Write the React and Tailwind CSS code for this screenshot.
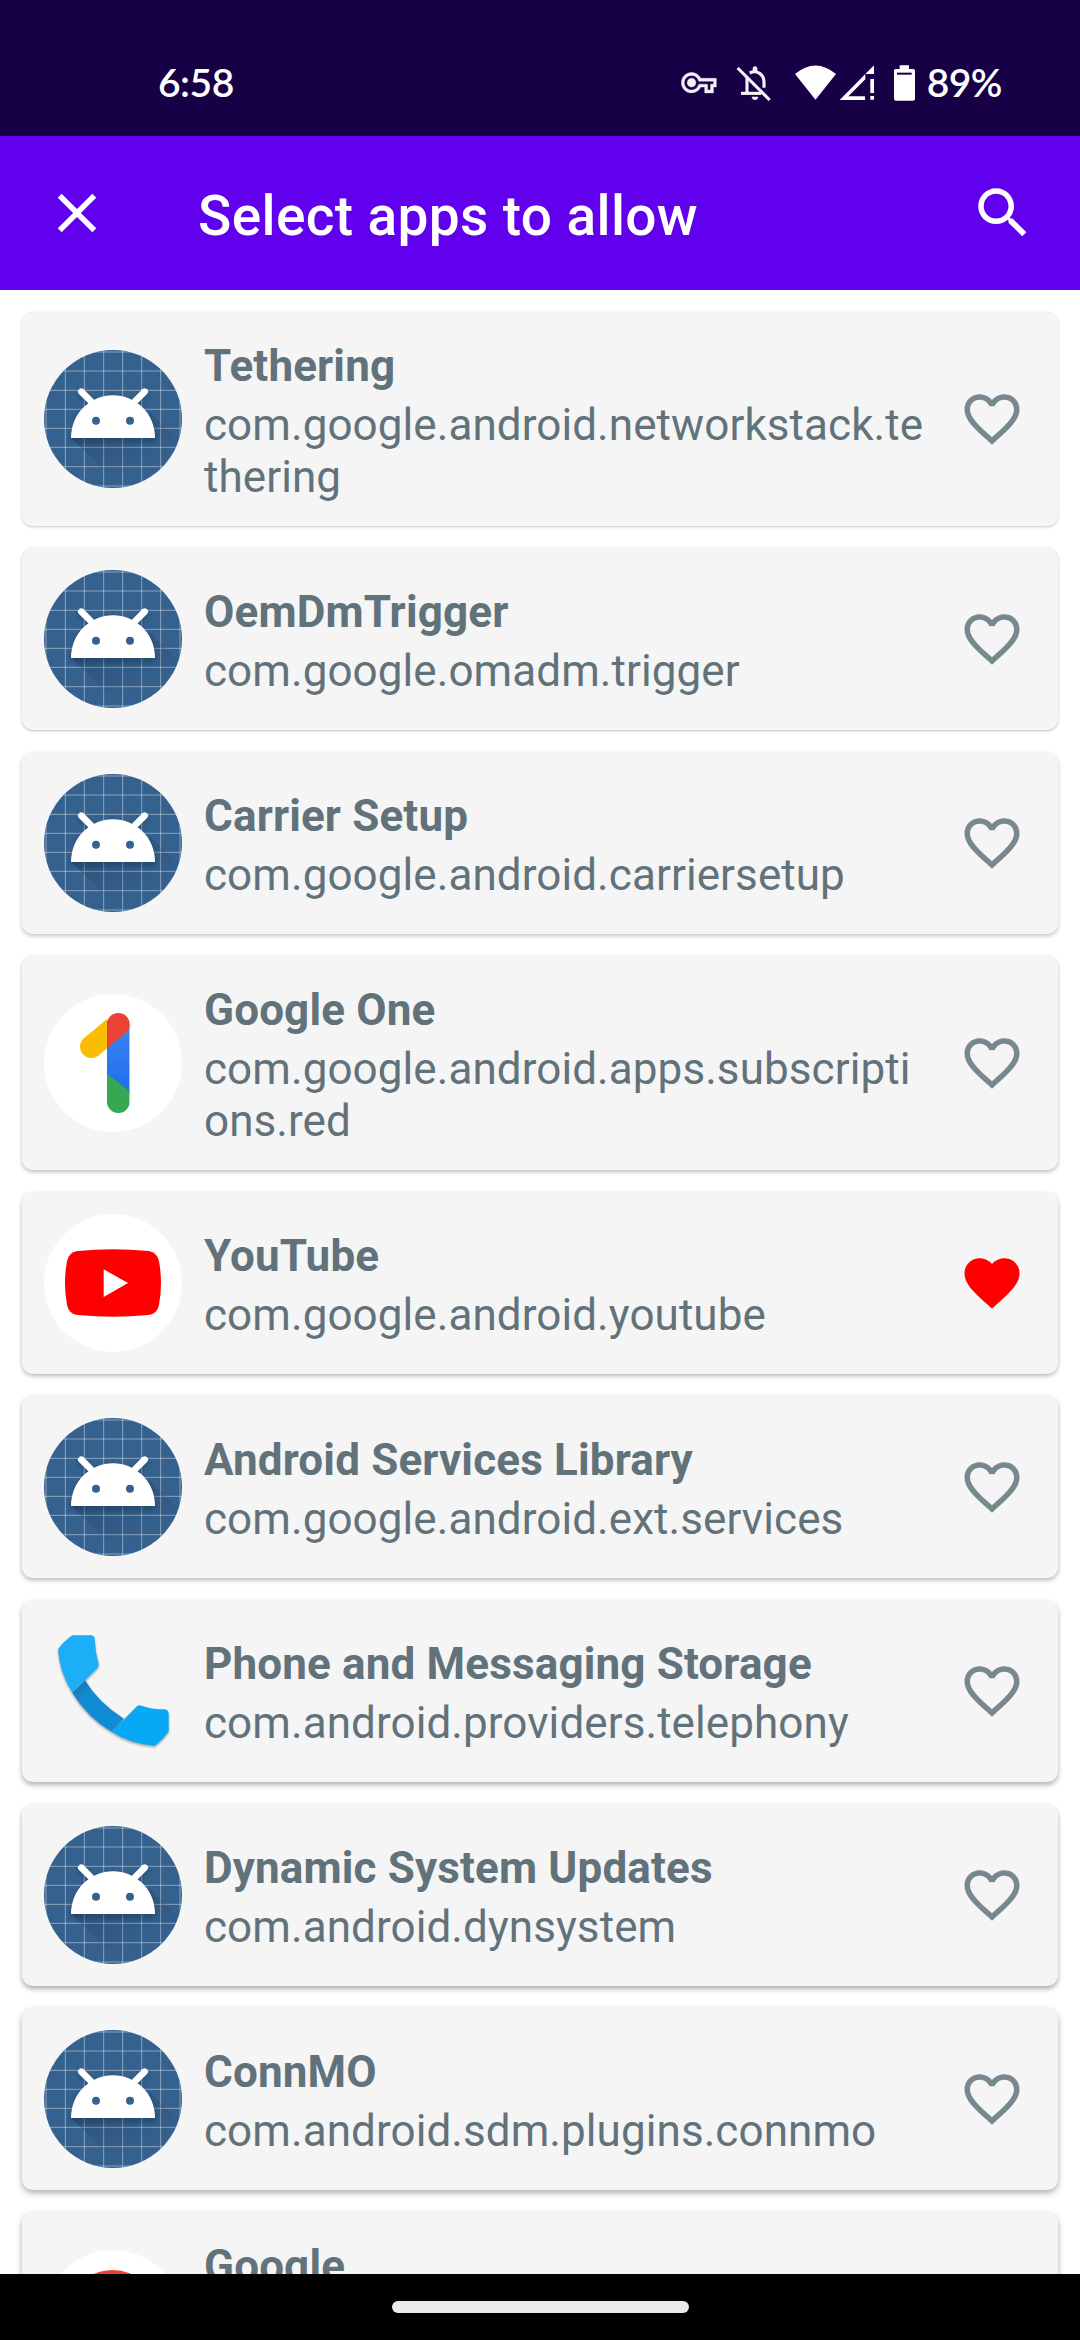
import React from "react";

const HEART_OUTLINE =
  "M16.5 3c-1.74 0-3.41.81-4.5 2.09C10.91 3.81 9.24 3 7.5 3 4.42 3 2 5.42 2 8.5c0 3.78 3.4 6.86 8.55 11.54L12 21.35l1.45-1.32C18.6 15.36 22 12.28 22 8.5 22 5.42 19.58 3 16.5 3zm-4.4 15.55l-.1.1-.1-.1C7.14 14.24 4 11.39 4 8.5 4 6.5 5.5 5 7.5 5c1.54 0 3.04.99 3.57 2.36h1.87C13.46 5.99 14.96 5 16.5 5c2 0 3.5 1.5 3.5 3.5 0 2.89-3.14 5.74-7.9 10.05z";
const HEART_FILLED =
  "M12 21.35l-1.45-1.32C5.4 15.36 2 12.28 2 8.5 2 5.42 4.42 3 7.5 3c1.74 0 3.41.81 4.5 2.09C13.09 3.81 14.76 3 16.5 3 19.58 3 22 5.42 22 8.5c0 3.78-3.4 6.86-8.55 11.54L12 21.35z";

const COLUMNS = [6, 64, 121, 179, 236, 293, 350, 408];
const ROWS = [6, 63, 121, 178, 235, 292, 350, 408];

function AndroidIcon({ id }) {
  return (
    <svg viewBox="0 0 414 414" className="size-[138px] shrink-0">
      <defs>
        <clipPath id={`${id}-clip`}>
          <circle cx="207" cy="207" r="207" />
        </clipPath>
        <linearGradient id={`${id}-shade`} gradientUnits="userSpaceOnUse" x1="160" y1="230" x2="235" y2="385">
          <stop offset="0" stopColor="#10243a" stopOpacity="0.24" />
          <stop offset="1" stopColor="#10243a" stopOpacity="0" />
        </linearGradient>
        <filter id={`${id}-blur`} x="-20%" y="-20%" width="140%" height="150%">
          <feGaussianBlur stdDeviation="8" />
        </filter>
      </defs>
      <g clipPath={`url(#${id}-clip)`}>
        <rect width="414" height="414" fill="#35618e" />
        <g stroke="#ffffff" strokeOpacity="0.42" strokeWidth="3">
          {COLUMNS.map((x) => (
            <line key={x} x1={x} y1="0" x2={x} y2="414" />
          ))}
          {ROWS.map((y) => (
            <line key={y} x1="0" y1={y} x2="414" y2={y} />
          ))}
        </g>
        <path d="M82 264 L240 422 H430 V300 L320 190z" fill={`url(#${id}-shade)`} />
        <path d="M81 270 A126 128 0 0 1 333 270 V274 H81z" fill="#0b1f36" fillOpacity="0.3" filter={`url(#${id}-blur)`} />
        <g stroke="#0b1f36" strokeOpacity="0.25" strokeWidth="20" strokeLinecap="round" filter={`url(#${id}-blur)`}>
          <line x1="112" y1="132" x2="143" y2="165" />
          <line x1="302" y1="132" x2="271" y2="165" />
        </g>
      </g>
      <g stroke="#ffffff" strokeWidth="20" strokeLinecap="round">
        <line x1="112" y1="125" x2="146" y2="159" />
        <line x1="302" y1="125" x2="268" y2="159" />
      </g>
      <path d="M81 264 C81 190 139 136 207 136 S333 190 333 264z" fill="#ffffff" />
      <circle cx="156" cy="212" r="12" fill="#35618e" />
      <circle cx="258" cy="212" r="12" fill="#35618e" />
    </svg>
  );
}

function GoogleOneIcon() {
  return (
    <svg viewBox="132 162 414 414" className="size-[138px] shrink-0">
      <defs>
        <clipPath id="one-stem">
          <rect x="321" y="219" width="68" height="300" rx="34" />
        </clipPath>
        <clipPath id="one-left">
          <rect x="200" y="200" width="121.5" height="200" />
        </clipPath>
        <linearGradient id="one-blue" x1="0" y1="0" x2="0" y2="1">
          <stop offset="0" stopColor="#4285f4" />
          <stop offset="1" stopColor="#1a6fe8" />
        </linearGradient>
      </defs>
      <circle cx="339" cy="369" r="207" fill="#ffffff" />
      <line x1="274" y1="320" x2="355" y2="253" stroke="#fbbc04" strokeWidth="68" strokeLinecap="round" clipPath="url(#one-left)" />
      <g clipPath="url(#one-stem)">
        <rect x="321" y="240" width="68" height="220" fill="url(#one-blue)" />
        <path d="M321 402 L389 453 V520 H321z" fill="#34a853" />
        <path d="M321 210 H389 V264 Q386 274 376 280 L321 324z" fill="#ea4335" />
      </g>
    </svg>
  );
}

function YouTubeIcon() {
  return (
    <svg viewBox="132 822 414 414" className="size-[138px] shrink-0">
      <circle cx="339" cy="1029" r="207" fill="#ffffff" />
      <path
        d="M232 933 Q339 922 446 933 Q472 937 477 964 Q489 1029 477 1094 Q472 1121 446 1125 Q339 1136 232 1125 Q206 1121 201 1094 Q189 1029 201 964 Q206 937 232 933z"
        fill="#ff0000"
      />
      <path d="M311 988 L384 1029 L311 1071z" fill="#ffffff" />
    </svg>
  );
}

function PhoneIcon() {
  return (
    <svg viewBox="132 96 414 414" className="size-[138px] shrink-0">
      <defs>
        <linearGradient id="phone-mid" gradientUnits="userSpaceOnUse" x1="236" y1="290" x2="262" y2="318">
          <stop offset="0" stopColor="#1a78b8" />
          <stop offset="1" stopColor="#108cd5" />
        </linearGradient>
        <filter id="phone-shadow" x="-10%" y="-10%" width="120%" height="120%" colorInterpolationFilters="sRGB">
          <feDropShadow dx="0" dy="5" stdDeviation="3.5" floodColor="#000000" floodOpacity="0.35" />
        </filter>
      </defs>
      <g filter="url(#phone-shadow)">
        <path d="M255 271 Q297 340 372 386 L335 425 Q262 382 217 308z" fill="url(#phone-mid)" />
        <path d="M217 136 H272 Q284 136 284 148 Q286 188 296 222 Q297 229 292 234 L217 308 Q178 246 174 178 Q192 153 217 136z" fill="#1caff8" />
        <path d="M335 425 L411 349 Q416 344 424 347 Q455 358 492 358 Q506 358 506 372 V424 Q488 450 464 467 Q392 462 335 425z" fill="#07a9f6" />
      </g>
    </svg>
  );
}

function GoogleIcon() {
  return (
    <svg viewBox="0 0 138 138" className="size-[138px] shrink-0">
      <circle cx="69" cy="69" r="69" fill="#ffffff" />
      <g fill="none" strokeWidth="18">
        <path d="M97 41 A40 40 0 0 0 34 49" stroke="#ea4335" />
        <path d="M34 49 A40 40 0 0 0 34 89" stroke="#fbbc04" />
        <path d="M34 89 A40 40 0 0 0 95 98" stroke="#34a853" />
        <path d="M95 98 A40 40 0 0 0 108 69 H70" stroke="#4285f4" />
      </g>
    </svg>
  );
}

const APPS = [
  { name: "Tethering", pkg: "com.google.android.networkstack.tethering", icon: "android", tall: true, shadow: "shadow-[0_1px_3px_rgba(0,0,0,0.22)]" },
  { name: "OemDmTrigger", pkg: "com.google.omadm.trigger", icon: "android", shadow: "shadow-[0_1px_3px_rgba(0,0,0,0.26)]" },
  { name: "Carrier Setup", pkg: "com.google.android.carriersetup", icon: "android", shadow: "shadow-[0_2px_4px_rgba(0,0,0,0.24)]" },
  { name: "Google One", pkg: "com.google.android.apps.subscriptions.red", icon: "one", tall: true, shadow: "shadow-[0_2px_4px_rgba(0,0,0,0.26)]" },
  { name: "YouTube", pkg: "com.google.android.youtube", icon: "youtube", liked: true, shadow: "shadow-[0_2px_4px_rgba(0,0,0,0.28)]" },
  { name: "Android Services Library", pkg: "com.google.android.ext.services", icon: "android", shadow: "shadow-[0_2px_5px_rgba(0,0,0,0.3)]" },
  { name: "Phone and Messaging Storage", pkg: "com.android.providers.telephony", icon: "phone", shadow: "shadow-[0_3px_5px_rgba(0,0,0,0.3)]" },
  { name: "Dynamic System Updates", pkg: "com.android.dynsystem", icon: "android", shadow: "shadow-[0_3px_5px_rgba(0,0,0,0.32)]" },
  { name: "ConnMO", pkg: "com.android.sdm.plugins.connmo", icon: "android", shadow: "shadow-[0_3px_6px_rgba(0,0,0,0.32)]" },
  { name: "Google", pkg: "com.google.android.googlequicksearchbox", icon: "google", tall: true, shadow: "shadow-[0_3px_6px_rgba(0,0,0,0.32)]" },
];

function AppIcon({ kind, id }) {
  if (kind === "one") return <GoogleOneIcon />;
  if (kind === "youtube") return <YouTubeIcon />;
  if (kind === "phone") return <PhoneIcon />;
  if (kind === "google") return <GoogleIcon />;
  return <AndroidIcon id={id} />;
}

function AppCard({ app, id }) {
  return (
    <li
      className={`flex shrink-0 items-center rounded-[11px] bg-[#f5f5f5] pr-[33px] pl-[22px] ${app.tall ? "h-[214px]" : "h-[182px]"} ${app.shadow}`}
    >
      <AppIcon kind={app.icon} id={id} />
      <div className="ml-[22px] flex w-[724px] flex-col gap-[7px] pt-[4px] text-[44px] leading-[52px] text-[#62727b]">
        <h2 className="font-bold tracking-[0.15px]">{app.name}</h2>
        <p className="tracking-[0.08px] break-all">{app.pkg}</p>
      </div>
      <button className="ml-auto" aria-label="Allow">
        <svg viewBox="0 0 24 24" className="size-[66px]">
          <path d={app.liked ? HEART_FILLED : HEART_OUTLINE} fill={app.liked ? "#ff0000" : "#78888f"} />
        </svg>
      </button>
    </li>
  );
}

function StatusBar() {
  return (
    <div className="flex h-[136px] shrink-0 items-start bg-[#170045] pt-[59px] pr-[78px] pl-[158px] text-white">
      <span className="font-[Lato,sans-serif] text-[39px] leading-[46px] font-semibold tracking-[-0.5px]">6:58</span>
      {/* key, muted bell, wifi, signal and battery indicators */}
      <svg viewBox="0 0 246 46" className="mt-px ml-auto h-[46px] w-[246px]">
        <path
          d="M22 19h-6v-4h-2.68c-1.14 2.42-3.6 4-6.32 4-3.86 0-7-3.14-7-7s3.14-7 7-7c2.72 0 5.17 1.58 6.32 4H24v6h-2v4zm-4-2h2v-4h2v-2H11.94l-.23-.67C11.01 8.34 9.11 7 7 7c-2.76 0-5 2.24-5 5s2.24 5 5 5c2.11 0 4.01-1.34 4.71-3.33l.23-.67H18v4zM7 15c-1.65 0-3-1.35-3-3s1.35-3 3-3 3 1.35 3 3-1.35 3-3 3z"
          transform="translate(0.35 5.2) scale(1.458)"
          fill="#f3f1f6"
          stroke="#f3f1f6"
          strokeWidth="0.25"
        />
        <g transform="translate(-41 -20) scale(0.33333)">
          <g fill="none" stroke="#f3f1f6" strokeWidth="9.500">
            <path d="M293 84 L389 180" />
            <path d="M303 160 H364" />
            <path d="M321 112 V160" />
            <path d="M329 99 Q345 91 359 100 Q372 109 372 126 V143" />
          </g>
          <path d="M338 95 V87 Q338 79 345 79 Q352 79 352 87 V95z M335 170 H355 Q353 180 345 180 Q337 180 335 170z" fill="#f3f1f6" />
          <path d="M465 102 Q526 51 588 102 L526.500 179z" fill="#ffffff" />
          <path d="M599 180 L702 76 V102 H676 V118 L625 169 H675 V180z" fill="#ffffff" />
          <path d="M691 117 H702 V159 H691z M691 168 H702 V179 H691z" fill="#ffffff" />
          <path d="M779 76 H807 V87 H820 Q825 87 825 92 V176 Q825 182 819 182 H768 Q762 182 762 176 V92 Q762 87 767 87 H779z" fill="#ffffff" />
          <rect x="771" y="98" width="44" height="6" fill="#170045" />
        </g>
      </svg>
      <span className="font-[Lato,sans-serif] text-[39px] leading-[46px] font-semibold tracking-[-0.5px]">89%</span>
    </div>
  );
}

function AppBar() {
  return (
    <header className="flex h-[154px] shrink-0 items-center bg-[#6100ed] px-[44px] text-white">
      <svg viewBox="0 0 24 24" className="size-[66px]" fill="#ffffff">
        <path d="M19 6.410 17.590 5 12 10.590 6.410 5 5 6.410 10.590 12 5 17.590 6.410 19 12 13.410 17.590 19 19 17.590 13.410 12z" />
      </svg>
      <h1 className="ml-[88px] pt-[6px] text-[55px] leading-[64px] font-medium tracking-[0.37px]">Select apps to allow</h1>
      <svg viewBox="0 0 24 24" className="ml-auto size-[66px]" fill="#ffffff">
        <path d="M15.500 14h-.79l-.28-.27C15.410 12.590 16 11.110 16 9.500 16 5.910 13.090 3 9.500 3S3 5.910 3 9.500 5.910 16 9.500 16c1.610 0 3.090-.59 4.230-1.570l.27.28v.79l5 4.990L20.490 19l-4.990-5zm-6 0C7.010 14 5 11.990 5 9.500S7.010 5 9.500 5 14 7.010 14 9.500 11.990 14 9.500 14z" />
      </svg>
    </header>
  );
}

export default function App() {
  return (
    <div className="flex h-[2340px] w-[1080px] flex-col overflow-hidden bg-white font-[Roboto,sans-serif]">
      <StatusBar />
      <AppBar />
      <ul className="flex min-h-0 flex-1 flex-col gap-[22px] overflow-hidden p-[22px]">
        {APPS.map((app, i) => (
          <AppCard key={app.name} app={app} id={`app-${i}`} />
        ))}
      </ul>
      <div className="flex h-[66px] shrink-0 justify-center bg-black pt-[27px]">
        <div className="h-[12px] w-[297px] rounded-full bg-[#ebebeb]" />
      </div>
    </div>
  );
}
